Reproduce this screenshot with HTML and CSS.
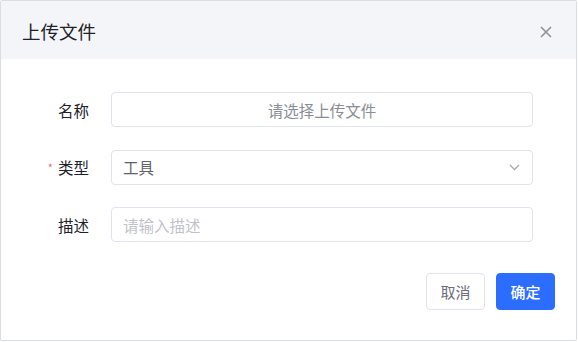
FILE: index.html
```html
<!DOCTYPE html>
<html lang="zh">
<head>
<meta charset="utf-8">
<link rel="stylesheet" href="styles.css">
</head>
<body>
<div class="dialog">
  <div class="dialog-header">
    <span class="dialog-title">上传文件</span>
    <svg class="close" width="12" height="12" viewBox="0 0 12 12"><path d="M1 1L11 11M11 1L1 11" stroke="#8d9199" stroke-width="1.6" fill="none"/></svg>
  </div>
  <div class="dialog-body">
    <div class="form-row">
      <label class="form-label">名称</label>
      <div class="input input-center"><span class="placeholder-dark">请选择上传文件</span></div>
    </div>
    <div class="form-row">
      <label class="form-label"><span class="required">*</span>类型</label>
      <div class="input input-select"><span class="value">工具</span>
        <svg class="chevron" width="11" height="7" viewBox="0 0 11 7"><path d="M1 1L5.5 5.5L10 1" stroke="#a8abb2" stroke-width="1.3" fill="none"/></svg>
      </div>
    </div>
    <div class="form-row">
      <label class="form-label">描述</label>
      <div class="input"><span class="placeholder">请输入描述</span></div>
    </div>
  </div>
  <div class="dialog-footer">
    <button class="btn btn-default">取消</button>
    <button class="btn btn-primary">确定</button>
  </div>
</div>
</body>
</html>
```
FILE: styles.css
```css
* { box-sizing: border-box; }
html, body { margin: 0; padding: 0; background: #fff; }
body { font-family: "Noto Sans CJK SC", "Noto Sans", sans-serif; }
.dialog {
  width: 577px;
  height: 341px;
  border: 1px solid #dcdde2;
  border-radius: 2px;
  background: #fff;
  display: flex;
  flex-direction: column;
}
.dialog-header {
  height: 58px;
  background: #f4f5f8;
  display: flex;
  align-items: center;
  justify-content: space-between;
  padding: 0 24px 0 21px;
}
.dialog-title { font-size: 18.5px; color: #1d2129; line-height: 20px; margin-top: 2px; }
.close { display: block; margin-top: 3px; }
.dialog-body {
  padding: 33px 43px 0 0;
  display: flex;
  flex-direction: column;
  gap: 22.5px;
}
.form-row {
  display: grid;
  grid-template-columns: 110px 1fr;
  align-items: center;
}
.form-label {
  text-align: right;
  padding-right: 22px;
  font-size: 15.5px;
  color: #1d2129;
}
.required { color: #f56c6c; font-size: 11px; margin-right: 5px; vertical-align: 2px; }
.input {
  height: 35px;
  border: 1px solid #e2e2ee;
  border-radius: 4px;
  display: flex;
  align-items: center;
  padding: 0 11px;
  font-size: 15.5px;
}
.input-center { justify-content: center; }
.input-select { justify-content: space-between; padding-right: 12px; }
.placeholder-dark { color: #8a8d95; }
.placeholder { color: #bfc2c9; }
.value { color: #5f626a; }
.chevron { display: block; }
.dialog-footer {
  margin-top: auto;
  padding: 0 21px 30px 0;
  display: flex;
  justify-content: flex-end;
  gap: 11px;
}
.btn {
  height: 37px;
  width: 59px;
  border-radius: 4px;
  font-family: inherit;
  font-size: 15px;
  padding: 0;
  cursor: pointer;
}
.btn-default { background: #fff; border: 1px solid #e2e2ee; color: #6b6e76; }
.btn-primary { background: #2b6dff; border: 1px solid #2b6dff; color: #fff; font-weight: 500; }
```
